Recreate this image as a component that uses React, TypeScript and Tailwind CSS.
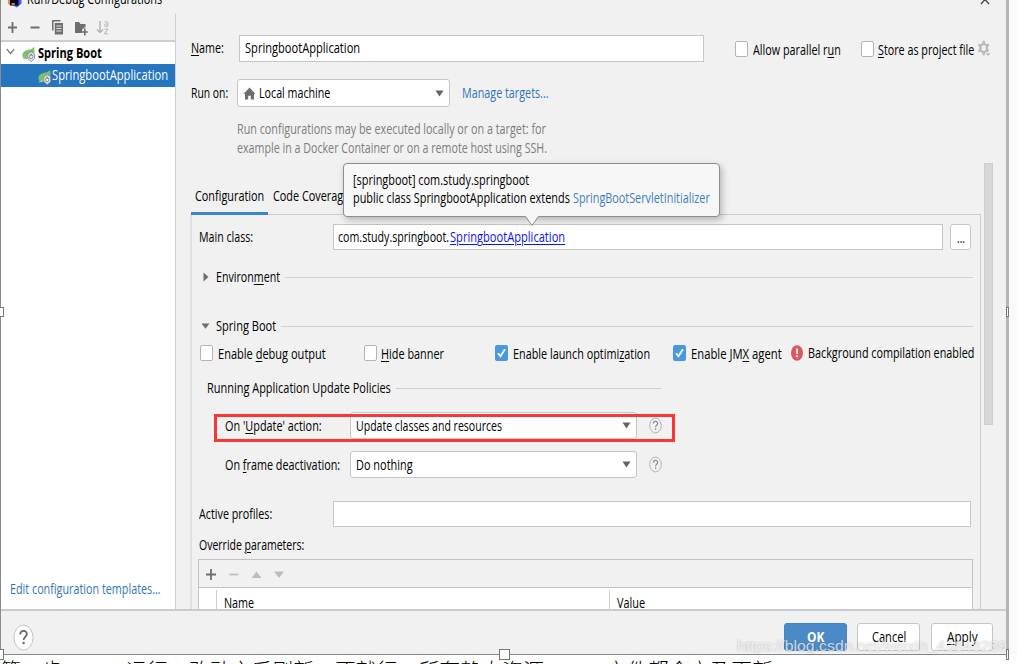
import { useLayoutEffect, useRef, useState, type ReactNode } from "react";

/** Text condensed horizontally to fill the width given by its classes. */
function Fit({ className = "", children }: { className?: string; children: ReactNode }) {
  const outer = useRef<HTMLSpanElement>(null);
  const inner = useRef<HTMLSpanElement>(null);
  const [scale, setScale] = useState(0.85);
  useLayoutEffect(() => {
    if (outer.current && inner.current) {
      setScale(outer.current.clientWidth / inner.current.offsetWidth);
    }
  }, []);
  return (
    <span ref={outer} className={`block shrink-0 whitespace-nowrap ${className}`}>
      <span ref={inner} className="inline-block origin-left" style={{ transform: `scaleX(${scale})` }}>
        {children}
      </span>
    </span>
  );
}

const U = ({ children }: { children: ReactNode }) => (
  <span className="underline decoration-1 underline-offset-2">{children}</span>
);

function Check({ on = false, className = "" }: { on?: boolean; className?: string }) {
  return on ? (
    <span className={`flex h-[16px] w-[13px] shrink-0 items-center justify-center rounded-[2px] bg-[#4a98e0] ${className}`}>
      <svg width="9" height="10" viewBox="0 0 9 10" fill="none" stroke="#fff" strokeWidth="1.8">
        <path d="M1 5.3 3.4 8.2 8 1.3" />
      </svg>
    </span>
  ) : (
    <span className={`h-[16px] w-[13px] shrink-0 rounded-[2px] border border-[#b4b4b4] bg-white ${className}`} />
  );
}

const Arrow = ({ className = "" }: { className?: string }) => (
  <svg width="9" height="7" viewBox="0 0 9 7" className={`shrink-0 ${className}`}>
    <path d="M0.5 0.5h8L4.5 6.5z" fill="#646464" />
  </svg>
);

const HelpMark = () => (
  <svg width="14" height="17" viewBox="0 0 14 17" className="ml-[12px] shrink-0" fill="none">
    <ellipse cx="6.5" cy="8.5" rx="5.8" ry="7.4" stroke="#adb5bb" />
    <path d="M4.5 6.6c0-3 4.1-3 4.1-.2 0 1.7-2 1.8-2 3.8" stroke="#7c8388" strokeWidth="1.1" />
    <path d="M6.6 11.3v1.5" stroke="#7c8388" strokeWidth="1.2" />
  </svg>
);

const SpringIcon = () => (
  <svg width="14" height="16" viewBox="0 0 14 16" className="shrink-0" fill="none">
    <path d="M12 0.5C11 3 8.5 3.2 5.5 4 1.5 5 0 7.5 0.6 10.5L2 13c4 .8 9-1 10-5C12.7 5.500 12.600 2.500 12 .5z" fill="#7cc06c" />
    <path d="M0.800 13.300C4 12 7 10 9.500 6.500" stroke="#b6dcab" strokeWidth=".8" />
    <path d="M9.200 5.700 12.600 7.800v4.800L9.200 15.500 5.800 12.600V7.800z" fill="#e7ecef" stroke="#8996a1" />
    <ellipse cx="9.200" cy="10.600" rx="1.700" ry="2.200" stroke="#77838d" strokeWidth=".9" />
    <path d="M9.200 7.500v2.600" stroke="#77838d" strokeWidth=".9" />
  </svg>
);

function Sidebar() {
  return (
    <aside className="flex w-[175px] shrink-0 flex-col border-r border-[#cfcfcf] bg-white">
      <div className="flex h-[28px] shrink-0 items-center border-b-2 border-[#cdcdcd] bg-[#f1f1f1] pl-[6px]">
        <svg width="108" height="18" viewBox="0 0 108 18" fill="none">
          <path d="M1 9.500h9M5.500 4v11M23.500 9.500h9" stroke="#6e6e6e" strokeWidth="1.800" />
          <path d="M45.800 12.500V2.800h7.700" stroke="#6e6e6e" strokeWidth="1.500" />
          <path d="M47.800 5h8.200v11.500h-8.200z" fill="#6e6e6e" />
          <path d="M49.300 8h5.200M49.300 10.500h5.200M49.300 13h5.200" stroke="#f1f1f1" strokeWidth=".9" />
          <path d="M68 4h4l1.500 2h5v4.500h-3v4.500H68z" fill="#6e6e6e" />
          <path d="M78.500 9.500v8M75 13.500h6" stroke="#f1f1f1" strokeWidth="3" />
          <path d="M77.800 10.500v7M74.800 14h6" stroke="#6e6e6e" strokeWidth="1.600" />
          <path d="M93 3v11M90 11.500l3 3 3-3" stroke="#b5b5b5" strokeWidth="1.500" />
          <path d="M97.500 4.200c2.500-1.200 3.300-.2 3.300 1v3c-3 .6-3.500-.2-3.500-1s1-1.300 3.500-1.200M97.500 11h3.400l-3.400 4.800h3.600" stroke="#b5b5b5" />
        </svg>
      </div>
      <div className="flex h-[22px] shrink-0 items-center pb-px pl-[5px]">
        <svg width="9" height="7" viewBox="0 0 9 7" fill="none" stroke="#777" strokeWidth="1.200" className="-mt-[2px] mr-[7px]">
          <path d="M.8 1 4.500 5.500 8.200 1" />
        </svg>
        <span className="pt-[3px]"><SpringIcon /></span>
        <Fit className="ml-[2px] w-[64px] font-bold">Spring Boot</Fit>
      </div>
      <div className="flex h-[23px] shrink-0 items-center bg-[#2675bf] pb-[2px] pl-[37px] text-white">
        <span className="pt-[4px]"><SpringIcon /></span>
        <Fit className="w-[116px]">SpringbootApplication</Fit>
      </div>
      <Fit className="mt-auto mb-[11px] ml-[9px] w-[151px] text-[#2f77b8]">Edit configuration templates...</Fit>
    </aside>
  );
}

function Tooltip() {
  return (
    <div className="absolute top-[163px] left-[343px] z-20 h-[54px] w-[377px] rounded-[4px] border border-[#8f8f8f] bg-[#f7f7f7] pt-[7px] pl-[9px] leading-[18px] shadow-[2px_3px_7px_rgba(0,0,0,0.25)]">
      <Fit className="w-[176px]">[springboot] com.study.springboot</Fit>
      <div className="flex">
        <Fit className="w-[217px]">public class SpringbootApplication extends</Fit>
        <Fit className="ml-[3px] w-[137px] text-[#3d7fbd]">SpringBootServletInitializer</Fit>
      </div>
      <svg width="14" height="11" viewBox="0 0 14 11" className="absolute top-[52px] left-[181px]">
        <path d="M.5 0 7 9.500 13.500 0" fill="#f7f7f7" />
        <path d="M.5.5 7 9.500 13.500.5" fill="none" stroke="#8f8f8f" />
      </svg>
    </div>
  );
}

function Policy({ label, value }: { label: ReactNode; value: ReactNode }) {
  return (
    <div className="flex h-[27px] items-center pl-[33px]">
      <div className="w-[125px] shrink-0">{label}</div>
      <div className="flex h-full w-[287px] shrink-0 items-center rounded-[3px] border border-[#c6c6c6] bg-white pr-[5px] pl-[5px]">
        {value}
        <Arrow className="ml-auto" />
      </div>
      <HelpMark />
    </div>
  );
}

function SpringForm() {
  return (
    <div className="flex h-[395px] w-[791px] flex-col overflow-hidden border-t border-r border-l-2 border-[#cccccc] border-l-[#e0e0e0]">
      <div className="mt-[9px] flex h-[26px] shrink-0 items-center pl-[7px]">
        <div className="w-[134px] shrink-0"><Fit className="w-[54px]">Main class:</Fit></div>
        <div className="flex h-full w-[610px] items-center border border-[#c6c6c6] bg-white pl-[4px]">
          <Fit className="w-[111px]">com.study.springboot.</Fit>
          <Fit className="ml-px w-[115px] text-[#0b12f0]"><U>SpringbootApplication</U></Fit>
        </div>
        <div className="ml-[7px] flex h-full w-[21px] justify-center rounded-[3px] border border-[#c6c6c6] bg-white pt-[4px]">
          <Fit className="w-[8px]">...</Fit>
        </div>
      </div>
      <div className="mt-[16px] flex h-[22px] shrink-0 items-center pr-[7px] pl-[11px]">
        <svg width="6" height="10" viewBox="0 0 6 10"><path d="M.5.5 5.500 5 .5 9.500z" fill="#6e6e6e" /></svg>
        <Fit className="ml-[7px] w-[64px]">Environ<U>m</U>ent</Fit>
        <span className="ml-[5px] h-px grow bg-[#d2d2d2]" />
      </div>
      <div className="mt-[27px] flex h-[22px] shrink-0 items-center pr-[7px] pl-[9px]">
        <svg width="9" height="6" viewBox="0 0 9 6"><path d="M.5.5h8L4.500 5.800z" fill="#6e6e6e" /></svg>
        <Fit className="ml-[6px] w-[60px]">Sprin<U>g</U> Boot</Fit>
        <span className="ml-[5px] h-px grow bg-[#d2d2d2]" />
      </div>
      <div className="mt-[5px] flex h-[22px] shrink-0 items-center pl-[8px]">
        <Check />
        <Fit className="ml-[5px] w-[108px] pt-[2px]">Enable <U>d</U>ebug output</Fit>
        <Check className="ml-[38px]" />
        <Fit className="ml-[4px] w-[63px] pt-[2px]"><U>H</U>ide banner</Fit>
        <Check on className="ml-[51px]" />
        <Fit className="ml-[5px] w-[137px] pt-[2px]">Enable launch optimi<U>z</U>ation</Fit>
        <Check on className="ml-[23px]" />
        <Fit className="ml-[5px] w-[91px] pt-[2px]">Enable JM<U>X</U> agent</Fit>
        <svg width="12" height="16" viewBox="0 0 12 16" className="ml-[9px] shrink-0">
          <ellipse cx="6" cy="8" rx="6" ry="7.800" fill="#db5860" />
          <path d="M6 3.500v5.300M6 10.300v2" stroke="#fff" strokeWidth="1.800" />
        </svg>
        <Fit className="ml-[5px] w-[166px]">Background compilation enabled</Fit>
      </div>
      <div className="mt-[13px] flex h-[22px] shrink-0 items-center pl-[15px]">
        <Fit className="w-[184px]">Running Application Update Policies</Fit>
        <span className="ml-[5px] h-px w-[265px] bg-[#cdcdcd]" />
      </div>
      <div className="mt-[13px] flex shrink-0 flex-col gap-[12px]">
        <Policy
          label={<Fit className="w-[97px]">On &apos;<U>U</U>pdate&apos; action:</Fit>}
          value={<Fit className="w-[146px]">Update classes and resources</Fit>}
        />
        <Policy
          label={<Fit className="w-[115px]">On <U>f</U>rame deactivation:</Fit>}
          value={<Fit className="w-[57px]">Do nothing</Fit>}
        />
      </div>
      <div className="mt-[23px] flex h-[26px] shrink-0 items-center pl-[7px]">
        <div className="w-[134px] shrink-0"><Fit className="w-[73px]">Active profiles:</Fit></div>
        <div className="h-full w-[638px] border border-[#c6c6c6] bg-white" />
      </div>
      <Fit className="mt-[9px] ml-[7px] w-[105px]">Override <U>p</U>arameters:</Fit>
      <div className="mt-[5px] ml-[6px] flex w-[775px] shrink-0 flex-col border border-b-0 border-[#c4c4c4]">
        <div className="flex h-[28px] items-center border-b border-[#c4c4c4] pl-[6px]">
          <svg width="82" height="14" viewBox="0 0 82 14">
            <path d="M1 7.500h10M6 2v11" stroke="#6e6e6e" strokeWidth="1.800" />
            <path d="M24.500 7.500h9" stroke="#bdbdbd" strokeWidth="1.800" />
            <path d="M46.500 11h10l-5-6.500zM69 4.500h10l-5 6.500z" fill="#bdbdbd" />
          </svg>
        </div>
        <div className="flex h-[30px] bg-white pt-[2px]">
          <div className="w-[18px] border-r border-[#cfcfcf]" />
          <div className="w-[393px] border-r border-[#cfcfcf] pt-[4px] pl-[7px]"><Fit className="w-[30px]">Name</Fit></div>
          <div className="pt-[4px] pl-[7px]"><Fit className="w-[28px]">Value</Fit></div>
        </div>
      </div>
    </div>
  );
}

function Editor() {
  return (
    <section className="flex min-w-0 grow flex-col pl-[14px]">
      <div className="mt-[21px] flex h-[27px] shrink-0 items-center pl-px">
        <div className="w-[48px] shrink-0 pb-px"><Fit className="w-[33px]"><U>N</U>ame:</Fit></div>
        <div className="flex h-full w-[465px] shrink-0 items-center border border-[#c6c6c6] bg-white pb-px pl-[5px]">
          <Fit className="w-[115px]">SpringbootApplication</Fit>
        </div>
        <Check className="ml-[31px]" />
        <Fit className="ml-[5px] w-[88px] pt-[2px]">Allow parallel r<U>u</U>n</Fit>
        <Check className="ml-[20px]" />
        <Fit className="ml-[4px] w-[96px] pt-[2px]"><U>S</U>tore as project file</Fit>
        <svg width="13" height="17" viewBox="0 0 13 17" className="ml-[4px] shrink-0" fill="none">
          <ellipse cx="5.700" cy="8" rx="3.300" ry="4.100" stroke="#b8b8b8" strokeWidth="2.200" />
          <path d="M5.700.8v3M5.700 12.200v3M.5 4.400l2.400 1.700M.5 11.600l2.400-1.700M10.900 4.400 8.500 6.100M10.500 11.200 8.500 9.900" stroke="#b8b8b8" strokeWidth="2.400" />
          <path d="M7.500 13.200h5L10 16z" fill="#b8b8b8" />
        </svg>
      </div>
      <div className="mt-[17px] flex h-[28px] shrink-0 items-center">
        <div className="w-[48px] shrink-0 pl-px"><Fit className="w-[37px]">Run on:</Fit></div>
        <div className="-ml-px flex h-full w-[213px] shrink-0 items-center rounded-[3px] border border-[#c6c6c6] bg-white pr-[5px] pl-[5px]">
          <svg width="13" height="13" viewBox="0 0 13 13"><path d="M6.500.5 12.500 7H11v5.500H7.800V8.800H5.200v3.700H2V7H.5z" fill="#6e6e6e" /></svg>
          <Fit className="ml-[3px] w-[71px]">Local machine</Fit>
          <Arrow className="ml-auto" />
        </div>
        <Fit className="ml-[12px] w-[87px] text-[#2f77b8]">Manage targets...</Fit>
      </div>
      <div className="mt-[12px] shrink-0 pl-[47px] leading-[19px] text-[#7d7d7d]">
        <Fit className="w-[309px]">Run configurations may be executed locally or on a target: for</Fit>
        <Fit className="w-[310px]">example in a Docker Container or on a remote host using SSH.</Fit>
      </div>
      <div className="mt-[6px] flex grow">
        <div className="flex w-[791px] shrink-0 flex-col">
          <div className="relative z-10 mt-[15px] -mb-px flex h-[37px] pl-px">
            <div className="flex w-[77px] border-b-[3px] border-[#3d83c9] pt-[9px] pl-[4px]"><Fit className="w-[69px]">Configuration</Fit></div>
            <div className="pt-[9px] pl-[5px]"><Fit className="w-[76px]">Code Coverage</Fit></div>
          </div>
          <SpringForm />
        </div>
        <div className="ml-[3px] h-[262px] w-[9px] border border-[#cdcdcd] bg-[#d8d8d8]" />
      </div>
    </section>
  );
}

const button = "flex h-[28px] items-center justify-center rounded-[3px] border";

export default function App() {
  return (
    <div className="relative flex h-[664px] w-[1017px] flex-col overflow-hidden bg-[#fafafa] font-['Open_Sans','Noto_Sans',sans-serif] text-[14px] leading-[18px] text-black">
      <div className="flex h-[655px] w-[1009px] shrink-0 flex-col border-r-[3px] border-b border-l border-r-[#b5b5b5] border-b-[#888] border-l-[#8c8c8c] bg-[#f1f1f1]">
        <header className="flex h-[14px] shrink-0 pl-[7px]">
          <svg width="14" height="8" viewBox="0 0 14 8">
            <path d="M0 0h4v6L0 4z" fill="#f88b21" />
            <path d="M9 0h4.500v3.500L9 7.500 5 5.500z" fill="#4a5cf0" />
            <path d="M2 0h8.500v5.500H2z" fill="#0d0713" />
            <path d="M3.500 4h3.500" stroke="#fff" />
          </svg>
          <Fit className="-mt-[10px] ml-[5px] w-[135px]">Run/Debug Configurations</Fit>
          <svg width="10" height="5" viewBox="0 0 10 5" className="mr-[16px] ml-auto" fill="none" stroke="#444" strokeWidth="1.300">
            <path d="M1 4 5 -.5 9 4" />
          </svg>
        </header>
        <main className="flex h-[595px] shrink-0 overflow-hidden">
          <Sidebar />
          <Editor />
        </main>
        <footer className="flex h-[45px] shrink-0 items-center border-t-2 border-[#cbcbcb] pr-[13px] pl-[12px]">
          <svg width="21" height="27" viewBox="0 0 21 27" className="mt-[9px]" fill="none">
            <ellipse cx="10.500" cy="13.500" rx="9.500" ry="12.500" fill="#fff" stroke="#c4c4c4" />
            <path d="M7.300 10.600c0-5 6.500-4.800 6.500-.5 0 2.800-3.200 2.900-3.200 6" stroke="#666" strokeWidth="1.800" />
            <path d="M10.600 17.800v2.300" stroke="#666" strokeWidth="2" />
          </svg>
          <div className="mt-[8px] ml-auto flex">
            <div className={`${button} w-[63px] border-[#4584c2] bg-[#4b8ac9] font-bold text-white`}><Fit className="w-[17px]">OK</Fit></div>
            <div className={`${button} ml-[10px] w-[63px] border-[#c6c6c6] bg-white`}><Fit className="w-[34px]">Cancel</Fit></div>
            <div className={`${button} ml-[11px] w-[62px] border-[#c6c6c6] bg-white`}><Fit className="w-[31px]"><U>A</U>pply</Fit></div>
          </div>
        </footer>
      </div>
      <div className="flex h-[9px] shrink-0 overflow-hidden bg-white font-['Noto_Sans_CJK_SC',sans-serif] text-[20.9px] leading-[28px] font-light whitespace-pre text-black">
        <span className="w-[126px] shrink-0">第一步，</span>
        <span className="w-[480px] shrink-0">运行，改动之后刷新，不就行，所有静态资源</span>
        <span>文件都会立及更新</span>
      </div>

      <Tooltip />
      <div className="absolute top-[414px] left-[214px] h-[28px] w-[461px] border-[3px] border-[#fb3434]" />
      <div className="absolute top-[307px] -left-[5px] h-[10px] w-[9px] border border-[#777] bg-white" />
      <div className="absolute top-[307px] left-[1006px] h-[10px] w-[3px] border border-[#777] bg-white" />
      <div className="absolute top-[649px] -left-[6px] h-[11px] w-[10px] border border-[#777] bg-white" />
      <div className="absolute top-[649px] left-[499px] h-[11px] w-[11px] border border-[#777] bg-white" />
      <div className="absolute top-[649px] left-[1006px] h-[11px] w-[3px] border border-[#777] bg-white" />
      <div className="absolute top-[637px] left-[737px] font-['Liberation_Sans',Arial,sans-serif] text-[15px] text-white/70 [text-shadow:0_0_2px_rgba(90,90,90,0.45)]">
        <Fit className="w-[270px]">https://blog.csdn.net/weixin_43848289</Fit>
      </div>
    </div>
  );
}
